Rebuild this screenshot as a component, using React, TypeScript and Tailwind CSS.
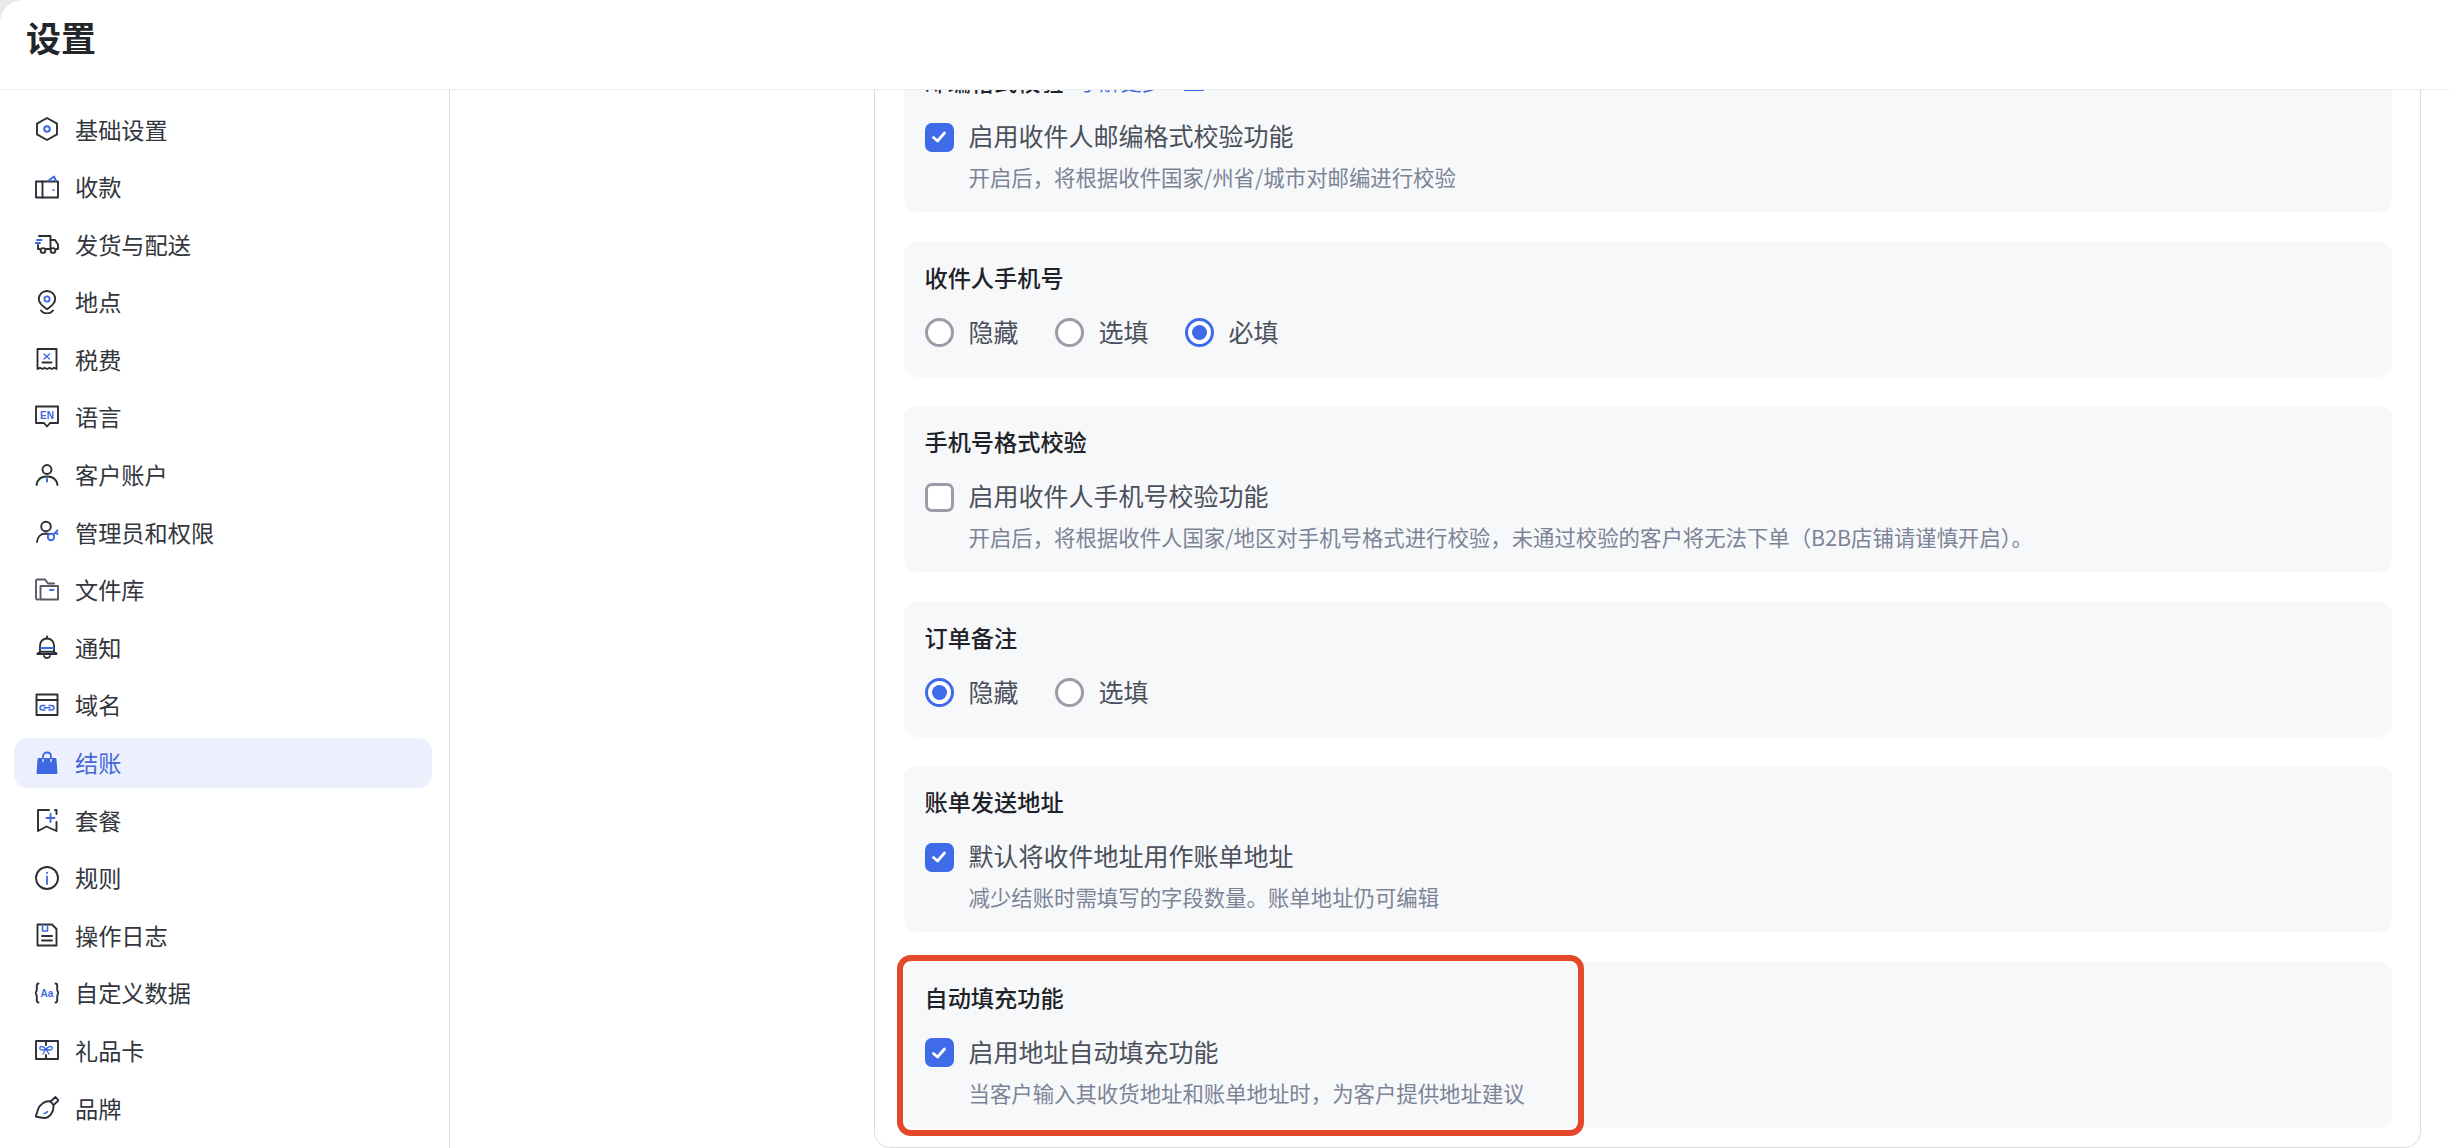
import React from "react";

const ink = "#2b2f36";
const blue = "#3f68e0";

function Ico({ children }: { children: React.ReactNode }) {
  return (
    <svg width="24" height="24" viewBox="0 0 24 24" fill="none" stroke={ink} strokeWidth="1.9" strokeLinecap="round" strokeLinejoin="round" className="shrink-0">
      {children}
    </svg>
  );
}

const navItems: { label: string; active?: boolean; icon: React.ReactNode }[] = [
  {
    label: "基础设置",
    icon: (
      <>
        <path d="M12 1 22 6.600V17.400L12 23 2 17.400V6.600Z" />
        <circle cx="12" cy="12" r="2.800" stroke={blue} strokeWidth="2" />
      </>
    ),
  },
  {
    label: "收款",
    icon: (
      <>
        <path d="M1 6.500H23V22.500H1Z" />
        <path d="M7.500 6.500V22.500" />
        <path d="M13 6 19 1.500 21 6" stroke={blue} />
        <circle cx="18.500" cy="15" r="1.100" fill={blue} stroke="none" />
      </>
    ),
  },
  {
    label: "发货与配送",
    icon: (
      <>
        <path d="M4 4H15.500V17H11" />
        <path d="M15.500 8H20L23 12.500V17H21.500" />
        <path d="M3 13V17H4.500" />
        <circle cx="8" cy="18.500" r="2.400" />
        <circle cx="18" cy="18.500" r="2.400" />
        <path d="M2 8H6.500M.5 11H5" stroke={blue} />
      </>
    ),
  },
  {
    label: "地点",
    icon: (
      <>
        <path d="M12 1C7.300 1 3.800 4.600 3.800 9c0 4.600 4.200 7.600 8.200 10.200 4-2.600 8.200-5.600 8.200-10.200C20.200 4.600 16.700 1 12 1Z" />
        <circle cx="12" cy="9" r="2.600" stroke={blue} strokeWidth="1.800" />
        <path d="M6 20.500c1.500 2 3.500 3 6 3s4.500-1 6-3" />
      </>
    ),
  },
  {
    label: "税费",
    icon: (
      <>
        <path d="M2.500 2H21.500V22L19 20.800 16.500 22 14.500 20.800 12 22 9.500 20.800 7.500 22 5 20.800 2.500 22Z" />
        <path d="M9 7 14.500 12" stroke={blue} strokeWidth="1.400" />
        <path d="M14.500 7 9 12" stroke={blue} strokeWidth="1.400" />
        <path d="M7.500 15.500H16.500" />
      </>
    ),
  },
  {
    label: "语言",
    icon: (
      <>
        <path d="M1 1.500H23V18H15L12 21.500 9 18H1Z" />
        <text x="12" y="13.500" textAnchor="middle" fontSize="10" fontWeight="700" fontFamily="Liberation Sans, sans-serif" fill={blue} stroke="none">EN</text>
      </>
    ),
  },
  {
    label: "客户账户",
    icon: (
      <>
        <circle cx="12" cy="6.500" r="4.500" />
        <path d="M1.500 22c.8-5.500 5-8.500 10.500-8.500S21.700 16.500 22.500 22" />
        <path d="M12 15.500V18.500" stroke={blue} strokeWidth="2" />
      </>
    ),
  },
  {
    label: "管理员和权限",
    icon: (
      <>
        <circle cx="11" cy="6.500" r="4.800" />
        <path d="M2 22c.4-5 3.800-8.300 8.500-8.500 1 0 2 .1 3 .4" />
        <circle cx="16" cy="17" r="3.200" stroke={blue} />
        <path d="M18.500 14.500 22.500 10.500M20.500 12.500 22.500 14" stroke={blue} />
      </>
    ),
  },
  {
    label: "文件库",
    icon: (
      <>
        <path d="M4 21.500H2.500C1.700 21.500 1 20.800 1 20V3C1 2.200 1.700 1.500 2.500 1.500H10L13 5.500H19" stroke="#555a64" />
        <path d="M5.500 8H23V21.500H5.500Z" stroke="#555a64" />
        <path d="M15 12H18.500" stroke={blue} strokeWidth="2" />
      </>
    ),
  },
  {
    label: "通知",
    icon: (
      <>
        <path d="M12 1.500V3.500" />
        <path d="M5 17V10.500C5 6.500 8 3.500 12 3.500S19 6.500 19 10.500V17" />
        <path d="M2.500 18.500C3.800 18 4.500 17.500 5 16.800H19C19.500 17.500 20.200 18 21.500 18.500V19H2.500Z" />
        <path d="M5.500 13H18.500" stroke={blue} strokeWidth="1.900" />
        <path d="M9 21C9.500 22.500 10.500 23 12 23S14.500 22.500 15 21" />
      </>
    ),
  },
  {
    label: "域名",
    icon: (
      <>
        <path d="M1.500 1.500H22.500V22H1.500Z" />
        <path d="M1.500 7H22.500" />
        <path d="M10 12.500H7.500C6 12.500 5 13.500 5 14.800S6 17 7.500 17H10M14 12.500H16.500C18 12.500 19 13.500 19 14.800S18 17 16.500 17H14M9 14.800H15" stroke={blue} strokeWidth="1.500" />
      </>
    ),
  },
  {
    label: "结账",
    active: true,
    icon: (
      <>
        <path d="M3.500 8H20.500L21.500 22H2.500Z" fill={blue} stroke={blue} />
        <path d="M8 9V5.500C8 3.200 9.700 1.500 12 1.500S16 3.200 16 5.500V9" stroke={blue} strokeWidth="1.800" />
        <path d="M8 10.500V8.500M16 10.500V8.500" stroke="#ebf0fc" strokeWidth="1.400" />
      </>
    ),
  },
  {
    label: "套餐",
    icon: (
      <>
        <path d="M14 2H3V23L11.500 18.500 21.500 23V14M21.500 6V2H20" />
        <path d="M15.500 6V14M11.500 10H19.500" stroke={blue} strokeWidth="1.900" />
      </>
    ),
  },
  {
    label: "规则",
    icon: (
      <>
        <circle cx="12" cy="12" r="11" />
        <path d="M12 10.500V18" stroke={blue} strokeWidth="1.800" />
        <circle cx="12" cy="6.800" r="1.100" fill={blue} stroke="none" />
      </>
    ),
  },
  {
    label: "操作日志",
    icon: (
      <>
        <path d="M2.500 1.500H17L21.500 6V22.500H2.500Z" />
        <path d="M7.500 2V8H12.500V2" stroke={blue} strokeWidth="1.600" />
        <path d="M7 13H17M7 17.500H17" />
      </>
    ),
  },
  {
    label: "自定义数据",
    icon: (
      <>
        <path d="M3.500 2.500C2 2.500 1.800 3.500 1.800 5V8.500C1.800 10 1.200 11 .2 12 1.200 13 1.800 14 1.800 15.500V19C1.800 20.500 2 21.500 3.500 21.500" />
        <path d="M20.500 2.500C22 2.500 22.200 3.500 22.200 5V8.500C22.200 10 22.800 11 23.800 12 22.800 13 22.200 14 22.200 15.500V19C22.200 20.500 22 21.500 20.500 21.500" />
        <text x="12" y="15.500" textAnchor="middle" fontSize="10" fontWeight="700" fontFamily="Liberation Sans, sans-serif" fill={blue} stroke="none">Aa</text>
      </>
    ),
  },
  {
    label: "礼品卡",
    icon: (
      <>
        <path d="M1 2H23V20H1Z" />
        <path d="M11 2V6M11 16V20" />
        <path d="M11 10C8 6.500 4.500 7 4.800 9.500 5 11.500 8 11.500 11 10ZM11 10C14 6.500 17.500 7 17.200 9.500 17 11.500 14 11.500 11 10ZM11 10 8 15M11 10 14 15" stroke={blue} strokeWidth="1.400" />
      </>
    ),
  },
  {
    label: "品牌",
    icon: (
      <>
        <path d="M15.500 5.500C10 4 4.500 9 3 13.500 2.400 15.500 1.500 18.500 .5 20.500 4 21 6 22 9.500 22 14.500 22 19 16 18.500 9Z" />
        <path d="M15.500 5.500 20.500 1 23.500 4.500 18.500 9" />
        <path d="M9 17.500C10.500 17.500 11.500 17 12.500 15.500" stroke={blue} strokeWidth="1.500" />
      </>
    ),
  },
];

function Checkbox({ checked }: { checked?: boolean }) {
  if (checked) {
    return (
      <div className="w-[29px] h-[29px] shrink-0 rounded-[7px] bg-[#3f6ae8] flex items-center justify-center">
        <svg width="18" height="18" viewBox="0 0 18 18" fill="none" stroke="#fff" strokeWidth="2.800" strokeLinecap="round" strokeLinejoin="round">
          <path d="M3.500 9.500 7.500 13 14.500 5" />
        </svg>
      </div>
    );
  }
  return <div className="w-[29px] h-[29px] shrink-0 rounded-[7px] bg-white border-[3px] border-[#9b9ca8]" />;
}

function Radio({ label, checked }: { label: string; checked?: boolean }) {
  return (
    <div className="flex items-center gap-[15px]">
      {checked ? (
        <div className="w-[29px] h-[29px] rounded-full bg-white border-[3px] border-[#3f6ae8] flex items-center justify-center">
          <div className="w-[15px] h-[15px] rounded-full bg-[#3f6ae8]" />
        </div>
      ) : (
        <div className="w-[29px] h-[29px] rounded-full bg-white border-[3px] border-[#9b9ca8]" />
      )}
      <span className="pb-[4px] text-[25px] leading-[36px] text-[#4b505b]">{label}</span>
    </div>
  );
}

function Title({ children }: { children: React.ReactNode }) {
  return <div className="text-[23.2px] leading-[32px] font-medium text-[#1f2329]">{children}</div>;
}

function CheckSection({ title, label, desc, checked, extra }: { title: string; label: string; desc: string; checked?: boolean; extra?: React.ReactNode }) {
  return (
    <div className="relative h-[166px] rounded-[12px] bg-[#f7f8fa] pt-[19px] pl-[21px]">
      <div className="flex items-center gap-[15px]">
        <Title>{title}</Title>
        {extra}
      </div>
      <div className="mt-[22px] flex items-center gap-[15px] h-[36px]">
        <Checkbox checked={checked} />
        <span className="pb-[4px] text-[25px] leading-[36px] text-[#4b505b]">{label}</span>
      </div>
      <div className="mt-[7px] pl-[44px] text-[21.4px] leading-[30px] text-[#7d8396]">{desc}</div>
    </div>
  );
}

function RadioSection({ title, options }: { title: string; options: { label: string; checked?: boolean }[] }) {
  return (
    <div className="h-[135px] rounded-[12px] bg-[#f7f8fa] pt-[19px] pl-[21px]">
      <Title>{title}</Title>
      <div className="mt-[22px] flex items-center gap-[36px] h-[36px]">
        {options.map((o) => (
          <Radio key={o.label} label={o.label} checked={o.checked} />
        ))}
      </div>
    </div>
  );
}

export default function App() {
  return (
    <div className="h-[1148px] w-[2450px] overflow-hidden bg-[#e9e9e9] font-['Noto_Sans_CJK_SC','Noto_Sans',sans-serif]">
      <div className="h-full flex flex-col bg-white rounded-tl-[24px] overflow-hidden">
        <header className="relative z-10 h-[90px] shrink-0 bg-white border-b-[1.5px] border-[#ececee] pl-[26px] flex items-center pb-[16px]">
          <h1 className="text-[35px] leading-[48px] font-semibold text-[#23262b]">设置</h1>
        </header>
        <div className="flex flex-1 min-h-0">
          <aside className="w-[450px] shrink-0 border-r-[1.5px] border-[#dcdcde] pt-[14px] pl-[14px] pr-[17px] flex flex-col gap-[7.6px]">
            {navItems.map((item) => (
              <div
                key={item.label}
                className={`h-[50px] shrink-0 rounded-[14px] pl-[21px] flex items-center gap-[16px] ${item.active ? "bg-[#ebf0fc]" : ""}`}
              >
                <Ico>{item.icon}</Ico>
                <span className={`pb-[1px] text-[23.2px] leading-[32px] ${item.active ? "text-[#4468d8]" : "text-[#33363d]"}`}>{item.label}</span>
              </div>
            ))}
          </aside>
          <main className="flex-1 min-w-0 overflow-hidden pl-[424px] pr-[29px]">
            <div className="-mt-[45px] h-[1103px] rounded-[16px] border-[1.5px] border-[#dcdcde] pl-[28.5px] pr-[28.5px] flex flex-col gap-[29.5px]">
              <CheckSection
                title="邮编格式校验"
                label="启用收件人邮编格式校验功能"
                desc="开启后，将根据收件国家/州省/城市对邮编进行校验"
                checked
                extra={
                  <div className="flex items-center gap-[21px] text-[#3f68e0]">
                    <span className="text-[21px] leading-[32px]">了解更多</span>
                    <svg width="20" height="20" viewBox="0 0 20 20" fill="none" stroke="currentColor" strokeWidth="1.800">
                      <path d="M1 1H19V19H1Z" />
                    </svg>
                  </div>
                }
              />
              <RadioSection title="收件人手机号" options={[{ label: "隐藏" }, { label: "选填" }, { label: "必填", checked: true }]} />
              <CheckSection
                title="手机号格式校验"
                label="启用收件人手机号校验功能"
                desc="开启后，将根据收件人国家/地区对手机号格式进行校验，未通过校验的客户将无法下单（B2B店铺请谨慎开启）。"
              />
              <RadioSection title="订单备注" options={[{ label: "隐藏", checked: true }, { label: "选填" }]} />
              <CheckSection
                title="账单发送地址"
                label="默认将收件地址用作账单地址"
                desc="减少结账时需填写的字段数量。账单地址仍可编辑"
                checked
              />
              <div className="relative">
                <CheckSection
                  title="自动填充功能"
                  label="启用地址自动填充功能"
                  desc="当客户输入其收货地址和账单地址时，为客户提供地址建议"
                  checked
                />
                {/* red callout drawn over the section */}
                <div className="absolute -left-[7px] -top-[7px] w-[687px] h-[181px] rounded-[14px] border-[6px] border-[#e4472a]" />
              </div>
            </div>
          </main>
        </div>
      </div>
    </div>
  );
}
